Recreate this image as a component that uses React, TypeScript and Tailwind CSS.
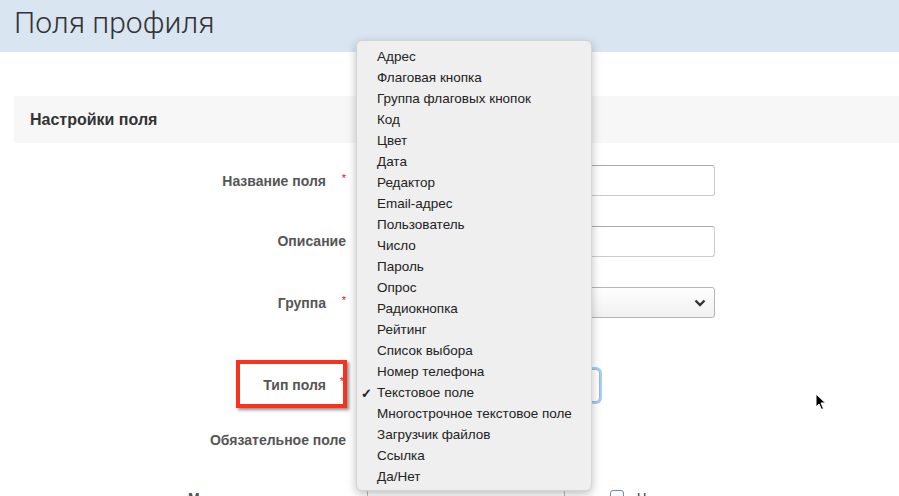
import React from "react";

const items = [
  "Адрес",
  "Флаговая кнопка",
  "Группа флаговых кнопок",
  "Код",
  "Цвет",
  "Дата",
  "Редактор",
  "Email-адрес",
  "Пользователь",
  "Число",
  "Пароль",
  "Опрос",
  "Радиокнопка",
  "Рейтинг",
  "Список выбора",
  "Номер телефона",
  "Текстовое поле",
  "Многострочное текстовое поле",
  "Загрузчик файлов",
  "Ссылка",
  "Да/Нет",
];

function Label({ text, required }: { text: string; required?: boolean }) {
  return (
    <div className="w-[346px] shrink-0 text-right text-[14px] font-bold text-[#555]">
      {text}
      {required ? (
        <span className="inline-block w-[20px] text-right text-[11px] font-normal text-[#d0112b] align-[4px]">*</span>
      ) : null}
    </div>
  );
}

export default function App() {
  return (
    <div className="relative w-[899px] h-[496px] overflow-hidden bg-white font-['Liberation_Sans',Arial,sans-serif]">
      <div className="h-[52px] bg-[#d9e6f2] pl-[14px] flex items-center">
        <h1 className="font-['Roboto',sans-serif] font-light text-[30px] leading-none text-[#333] -mt-[6px]">
          Поля профиля
        </h1>
      </div>
      <div className="h-[44px]" />
      <div className="ml-[14px] h-[47px] bg-[#f7f7f7] flex items-center pl-[16px]">
        <span className="text-[16px] font-bold text-[#333]">Настройки поля</span>
      </div>

      <div className="flex flex-col pt-[22px]">
        <div className="flex items-center h-[31px]">
          <Label text="Название поля" required />
          <div className="ml-[20px] w-[349px] h-[31px] rounded-[3px] border border-[#ccc] border-t-[#aaa] bg-white" />
        </div>
        <div className="flex items-center h-[31px] mt-[30px]">
          <Label text="Описание" />
          <div className="ml-[20px] w-[349px] h-[31px] rounded-[3px] border border-[#ccc] border-t-[#aaa] bg-white" />
        </div>
        <div className="flex items-center h-[31px] mt-[30px]">
          <Label text="Группа" required />
          <div className="ml-[20px] w-[349px] h-[31px] rounded-[3px] border border-[#b5b5b5] bg-gradient-to-b from-white to-[#f0f0f0] flex items-center justify-end pr-[8px]">
            <svg width="12" height="8" viewBox="0 0 12 8">
              <path d="M1.5 1.5 L6 6 L10.5 1.5" fill="none" stroke="#333" strokeWidth="2.4" />
            </svg>
          </div>
        </div>
        <div className="flex items-center h-[33px] mt-[51px]">
          <div className="w-[346px] shrink-0 flex justify-end">
            <div className="relative text-[14px] font-bold text-[#555] pr-[20px]">
              Тип поля
              <span className="absolute right-[2px] -top-[2px] text-[11px] font-normal text-[#d0112b]">*</span>
              <div className="absolute -left-[27px] -right-[1px] -top-[15px] -bottom-[12px] border-[4px] border-[#f8321c] shadow-[2px_2px_3px_rgba(0,0,0,0.45)]" />
            </div>
          </div>
          <div className="ml-[20px] w-[234px] h-[33px] rounded-[4px] border border-[#9fb9d9] bg-white shadow-[0_0_0_2px_#a9cdf5]" />
        </div>
        <div className="flex items-center h-[20px] mt-[28px]">
          <Label text="Обязательное поле" />
        </div>
        <div className="flex items-start h-[30px] mt-[39px]">
          <div className="w-[346px] shrink-0 flex justify-start pl-[188px] text-[14px] font-bold text-[#555] leading-none pt-[2px]">
            М
          </div>
          <div className="ml-[21px] w-[198px] h-[30px] rounded-[3px] border border-[#bbb] bg-white" />
          <div className="ml-[45px] mt-[1px] w-[14px] h-[14px] rounded-[3px] border border-[#5b8fd1] bg-white" />
          <span className="ml-[13px] mt-[2px] text-[13px] text-[#333] leading-none">Н</span>
        </div>
      </div>

      {/* Dropdown menu */}
      <div className="absolute left-[356px] top-[40px] w-[236px] h-[451px] rounded-[6px] bg-[#efefef] border border-[#d4d4d4] shadow-[0_3px_10px_rgba(0,0,0,0.25)] pt-[6px]">
        {items.map((it) => (
          <div key={it} className="relative h-[21px] flex items-center pl-[20px] text-[13.5px] text-[#222] font-['Liberation_Sans',Arial,sans-serif]">
            {it === "Текстовое поле" ? (
              <span className="absolute left-[4px] text-[13px] font-bold">✓</span>
            ) : null}
            {it}
          </div>
        ))}
      </div>

      {/* Mouse cursor */}
      <svg className="absolute left-[815px] top-[393px]" width="12" height="18" viewBox="0 0 12 18">
        <path d="M1 1 L1 14 L4 11 L6.5 16.5 L8.5 15.5 L6 10 L10.5 10 Z" fill="#000" stroke="#fff" strokeWidth="1" />
      </svg>
    </div>
  );
}
